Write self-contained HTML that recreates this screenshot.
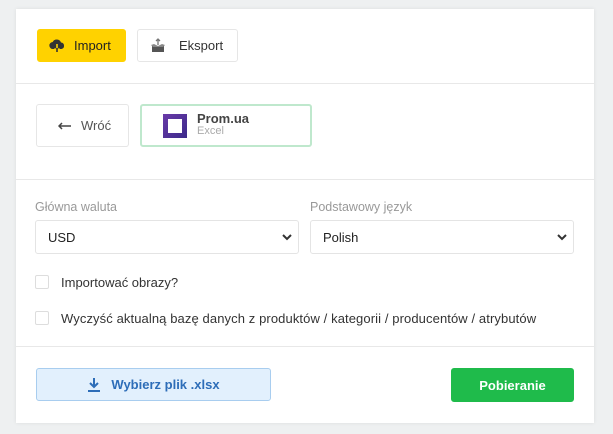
<!DOCTYPE html><html><head><meta charset="utf-8"><style>
*{box-sizing:border-box;margin:0;padding:0}
body{width:613px;height:434px;background:#eef0f1;font-family:"Liberation Sans",sans-serif;position:relative;overflow:hidden;color:#333}
.card{position:absolute;left:16px;top:9px;width:578px;height:414px;background:#fff;box-shadow:0 0 4px rgba(0,0,0,.08)}
.btn{position:absolute;border:1px solid #e6e6e6;border-radius:3px;background:#fff;font-size:13px;display:flex;align-items:center}
.hr{position:absolute;left:16px;width:578px;height:1px;background:#e8e8e8}
.sel{position:absolute;height:34px;border:1px solid #e4e4e4;border-radius:3px;font-size:13px;color:#222;padding-left:12px;display:flex;align-items:center}
.sel svg{position:absolute;right:6px;top:12px}
.lbl{position:absolute;font-size:12.5px;color:#999}
.cb{position:absolute;width:14px;height:14px;border:1px solid #ddd;border-radius:2px}
.ct{position:absolute;font-size:13px;color:#333}
</style></head><body>
<div class="card"></div>
<div class="btn" style="left:37px;top:29px;width:89px;height:33px;background:#ffd200;border-color:#ffd200">
<svg style="margin-left:11px" width="16" height="14" viewBox="0 0 16 14"><path d="M4 10a3.5 3.5 0 0 1-.3-7A4.5 4.5 0 0 1 12 3.5 3.3 3.3 0 0 1 12.5 10z" fill="#333"/><path d="M8 5v7M5.5 9.5 8 12l2.5-2.5" stroke="#ffd200" stroke-width="1.6" fill="none"/><path d="M8 9v4" stroke="#333" stroke-width="1.6"/></svg>
<span style="margin-left:9px;color:#222">Import</span></div>
<div class="btn" style="left:137px;top:29px;width:101px;height:33px">
<svg style="margin-left:12px" width="16" height="16" viewBox="0 0 16 16"><path d="M8 1v6M6 3l2-2 2 2" stroke="#777" stroke-width="1.3" fill="none"/><path d="M2 8h12v6H2z" fill="#555"/><path d="M1 7l3-1 4 2 4-2 3 1-2 2H3z" fill="#888"/></svg>
<span style="margin-left:13px;color:#333">Eksport</span></div>
<div class="hr" style="top:83px"></div>
<div class="btn" style="left:36px;top:104px;width:93px;height:43px">
<svg style="margin-left:21px" width="13" height="8" viewBox="0 0 13 8"><path d="M1 4h12M4 1 1 4l3 3" stroke="#444" stroke-width="1.5" fill="none"/></svg><span style="margin-left:10px;color:#555">Wróć</span></div>
<div class="btn" style="left:140px;top:104px;width:172px;height:43px;border:2px solid #bfe8cd">
<div style="margin-left:21px;width:24px;height:24px;background:linear-gradient(135deg,#6a3aa8,#3b2a8a);padding:5px"><div style="width:14px;height:14px;background:#fff"></div></div>
<div style="margin-left:10px;line-height:12px;margin-top:-2px"><div style="font-size:13px;font-weight:bold;color:#444">Prom.ua</div><div style="font-size:11px;color:#aaa">Excel</div></div></div>
<div class="hr" style="top:179px"></div>
<div class="lbl" style="left:35px;top:200px">Główna waluta</div>
<div class="lbl" style="left:310px;top:200px">Podstawowy język</div>
<div class="sel" style="left:35px;top:220px;width:264px">USD<svg width="10" height="8" viewBox="0 0 10 8"><path d="M1 2l4 4 4-4" stroke="#333" stroke-width="2" fill="none"/></svg></div>
<div class="sel" style="left:310px;top:220px;width:264px">Polish<svg width="10" height="8" viewBox="0 0 10 8"><path d="M1 2l4 4 4-4" stroke="#333" stroke-width="2" fill="none"/></svg></div>
<div class="cb" style="left:35px;top:275px"></div><div class="ct" style="left:61px;top:275px">Importować obrazy?</div>
<div class="cb" style="left:35px;top:311px"></div><div class="ct" style="left:61px;top:311px;letter-spacing:0.1px">Wyczyść aktualną bazę danych z produktów / kategorii / producentów / atrybutów</div>
<div class="hr" style="top:346px"></div>
<div class="btn" style="left:36px;top:368px;width:235px;height:33px;background:#e2f0fd;border-color:#a8cdef;justify-content:center;color:#2d6db8;font-weight:bold">
<svg width="14" height="16" viewBox="0 0 14 16"><path d="M7 1v9M3 6l4 4 4-4" stroke="#2d6db8" stroke-width="2" fill="none"/><path d="M1 14h12" stroke="#2d6db8" stroke-width="2"/></svg>
<span style="margin-left:10px">Wybierz plik .xlsx</span></div>
<div class="btn" style="left:451px;top:368px;width:123px;height:34px;background:#1fbb4b;border-color:#1fbb4b;justify-content:center;color:#fff;font-weight:bold">Pobieranie</div>
</body></html>
